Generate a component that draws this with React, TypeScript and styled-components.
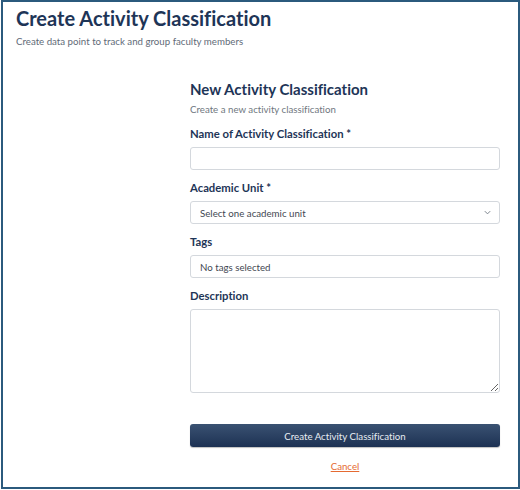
import React from "react";
import styled, { createGlobalStyle } from "styled-components";

const GlobalStyle = createGlobalStyle`
  html, body {
    margin: 0;
    padding: 0;
    background: #ffffff;
  }
  body {
    font-family: "Lato", "Noto Sans", sans-serif;
    font-variant-ligatures: none;
  }
  * {
    box-sizing: border-box;
  }
`;

const Frame = styled.div`
  width: 519px;
  height: 489px;
  margin-left: 1px;
  border: 2px solid #2b5a7d;
  padding: 4px 0 0 13px;
  display: flex;
  flex-direction: column;
`;

const PageTitle = styled.h1`
  margin: 0;
  font-size: 20px;
  font-weight: 700;
  line-height: 24px;
  color: #1e3557;
`;

const PageSubtitle = styled.p`
  margin: 4px 0 0;
  font-size: 9.7px;
  line-height: 14px;
  color: #5f6b78;
`;

const FormColumn = styled.form`
  width: 310px;
  margin: 31px 0 0 174px;
  display: flex;
  flex-direction: column;
`;

const FormTitle = styled.h2`
  margin: 0;
  font-size: 15px;
  font-weight: 700;
  line-height: 20px;
  color: #1e3557;
`;

const FormSubtitle = styled.p`
  margin: 3px 0 0;
  font-size: 9.7px;
  line-height: 14px;
  color: #6f7780;
`;

const Field = styled.div<{ $gap?: number }>`
  display: flex;
  flex-direction: column;
  margin-top: ${({ $gap }) => $gap ?? 11}px;
`;

const Label = styled.label`
  font-size: 11.3px;
  font-weight: 700;
  line-height: 14px;
  color: #1e3557;
  margin-bottom: 6px;
`;

const boxStyle = `
  width: 100%;
  border: 1px solid #d4d8dd;
  border-radius: 3px;
  background: #ffffff;
  font-family: "Lato", "Noto Sans", sans-serif;
  font-variant-ligatures: none;
  font-size: 9.7px;
  color: #39424c;
  padding: 0 9px;
`;

const TextInput = styled.input`
  ${boxStyle}
  height: 23px;
  outline: none;
`;

const SelectBox = styled.div`
  ${boxStyle}
  height: 23px;
  display: flex;
  align-items: center;
  justify-content: space-between;
  padding-right: 7px;
`;

const Placeholder = styled.span`
  color: #3f4852;
`;

const TextArea = styled.textarea`
  ${boxStyle}
  height: 84px;
  padding: 6px 9px;
  resize: vertical;
  outline: none;
`;

const SubmitButton = styled.button`
  margin-top: 31px;
  height: 23px;
  width: 100%;
  border: none;
  border-radius: 3px;
  background: linear-gradient(180deg, #3a5272 0%, #1d3153 100%);
  color: #e8edf3;
  font-family: "Lato", "Noto Sans", sans-serif;
  font-variant-ligatures: none;
  font-size: 9.7px;
  box-shadow: 0 1px 1px rgba(0, 0, 0, 0.25);
`;

const CancelLink = styled.a`
  align-self: center;
  margin-top: 12px;
  font-size: 9.7px;
  line-height: 14px;
  color: #e56a32;
  text-decoration: underline;
`;

const Chevron = () => (
  <svg width="9" height="9" viewBox="0 0 10 10" fill="none">
    <path d="M2 3.5 L5 6.5 L8 3.5" stroke="#7a838c" strokeWidth="1.1" />
  </svg>
);

export default function App() {
  return (
    <>
      <GlobalStyle />
      <Frame>
        <PageTitle>Create Activity Classification</PageTitle>
        <PageSubtitle>Create data point to track and group faculty members</PageSubtitle>
        <FormColumn onSubmit={(e) => e.preventDefault()}>
          <FormTitle>New Activity Classification</FormTitle>
          <FormSubtitle>Create a new activity classification</FormSubtitle>
          <Field>
            <Label>Name of Activity Classification *</Label>
            <TextInput />
          </Field>
          <Field>
            <Label>Academic Unit *</Label>
            <SelectBox>
              <Placeholder>Select one academic unit</Placeholder>
              <Chevron />
            </SelectBox>
          </Field>
          <Field>
            <Label>Tags</Label>
            <SelectBox>
              <Placeholder>No tags selected</Placeholder>
            </SelectBox>
          </Field>
          <Field>
            <Label>Description</Label>
            <TextArea />
          </Field>
          <SubmitButton type="submit">Create Activity Classification</SubmitButton>
          <CancelLink href="#">Cancel</CancelLink>
        </FormColumn>
      </Frame>
    </>
  );
}
